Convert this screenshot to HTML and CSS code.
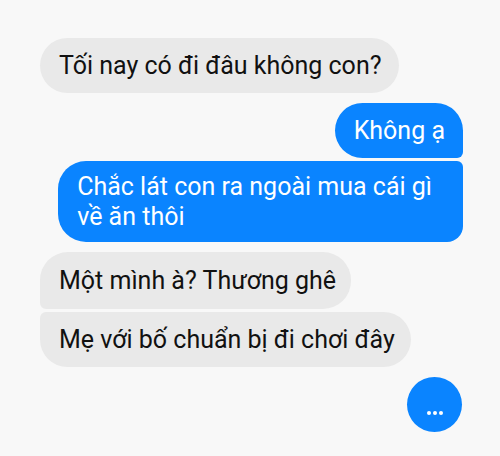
FILE: index.html
```html
<!DOCTYPE html>
<html lang="vi">

<head>
  <meta charset="UTF-8" />
  <meta name="viewport" content="width=device-width, initial-scale=1.0" />
  <title>chat</title>
  <link rel="stylesheet" href="styles.css">
</head>

<body>

  <div class="chat">
    <div class="msg in single">Tối nay có đi đâu không con?</div>

    <div class="group">
      <div class="msg out first">Không ạ</div>
      <div class="msg out last">Chắc lát con ra ngoài mua cái gì<br>về ăn thôi</div>
    </div>

    <div class="group">
      <div class="msg in first">Một mình à? Thương ghê</div>
      <div class="msg in last">Mẹ với bố chuẩn bị đi chơi đây</div>
    </div>

    <div class="typing">
      <span></span><span></span><span></span>
    </div>
  </div>

</body>

</html>
```

FILE: styles.css
```css
* {
  margin: 0;
  padding: 0;
  box-sizing: border-box;
}

body {
  font-family: Roboto, 'Noto Sans', sans-serif;
  background: #f8f8f8;
  color: #111;
  width: 500px;
  height: 456px;
  overflow: hidden;
}

.chat {
  display: flex;
  flex-direction: column;
  gap: 10px;
  padding: 38px 37px 0 40px;
}

.group {
  display: flex;
  flex-direction: column;
  gap: 3px;
}

.msg {
  font-size: 25px;
  line-height: 30px;
  padding: 13px 17px 12px 19px;
  border-radius: 28px;
  width: fit-content;
}

.msg.in {
  background: #e9e9e9;
  align-self: flex-start;
}

.msg.out {
  background: #0a84ff;
  color: #fff;
  align-self: flex-end;
}

.msg.out.first {
  border-bottom-right-radius: 6px;
  padding: 13px 18px 12px 19px;
}

.msg.out.last {
  border-top-right-radius: 6px;
  border-bottom-right-radius: 16px;
  padding: 11px 31px 10px 19px;
}

.msg.in.first {
  border-bottom-left-radius: 6px;
  padding-top: 14px;
  padding-bottom: 13px;
  padding-right: 15px;
}

.msg.in.last {
  border-top-left-radius: 6px;
  padding-bottom: 12px;
  padding-right: 16px;
}

.typing {
  align-self: flex-end;
  width: 55px;
  height: 55px;
  border-radius: 50%;
  background: #0a84ff;
  display: flex;
  justify-content: center;
  align-items: center;
  gap: 2px;
  padding-top: 16px;
  margin-right: 1px;
}

.typing span {
  width: 4px;
  height: 4px;
  border-radius: 50%;
  background: #fff;
}
```
